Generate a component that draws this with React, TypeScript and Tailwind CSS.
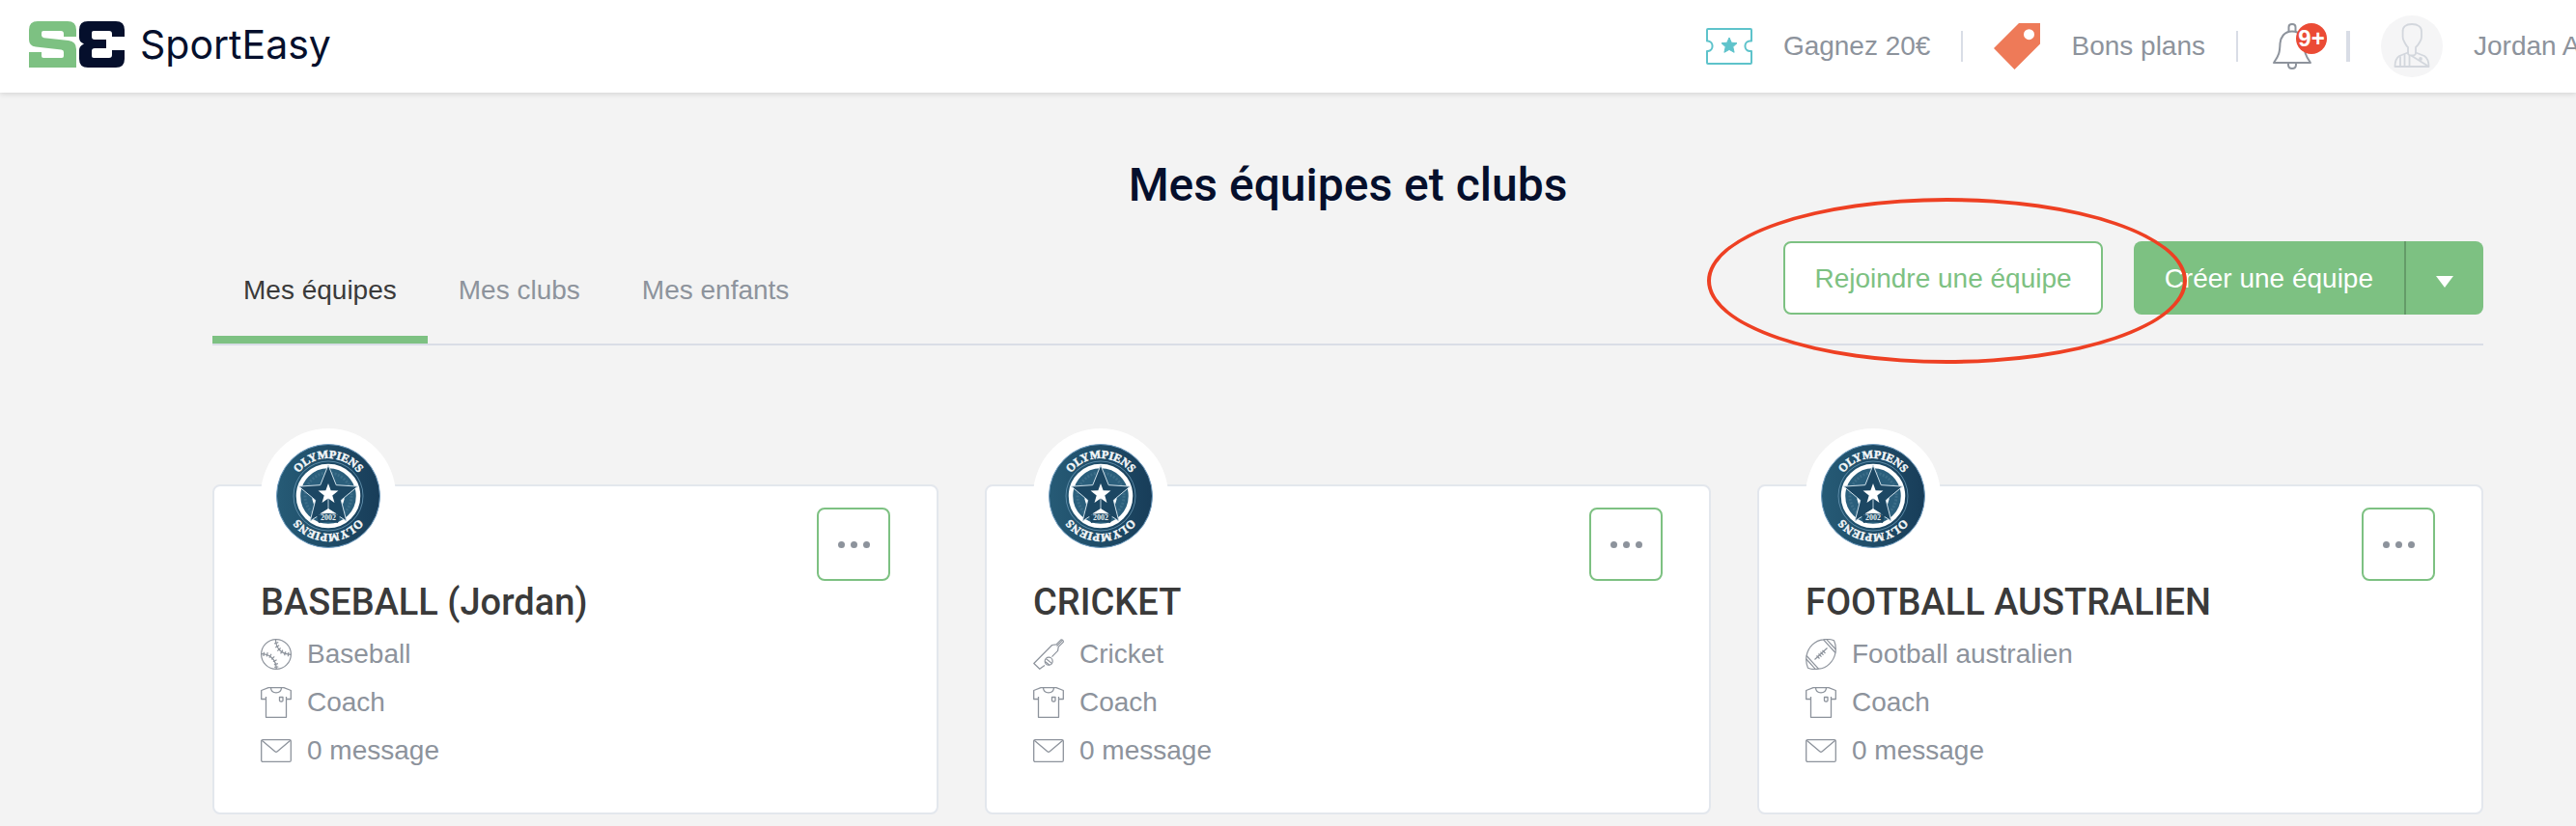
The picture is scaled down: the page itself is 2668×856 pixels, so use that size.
import { useId, useState, type ReactNode } from "react";

type Sport = "baseball" | "cricket" | "football";

type Team = {
  name: string;
  sport: string;
  icon: Sport;
  role: string;
  messages: string;
};

const teams: Team[] = [
  { name: "BASEBALL (Jordan)", sport: "Baseball", icon: "baseball", role: "Coach", messages: "0 message" },
  { name: "CRICKET", sport: "Cricket", icon: "cricket", role: "Coach", messages: "0 message" },
  { name: "FOOTBALL AUSTRALIEN", sport: "Football australien", icon: "football", role: "Coach", messages: "0 message" },
];

const tabs = ["Mes équipes", "Mes clubs", "Mes enfants"];

function LogoMark() {
  return (
    <svg viewBox="0 0 99 48" className="h-12 w-[99px]" aria-hidden="true">
      <path
        fill="#7dc182"
        d="M0 48V32H13V36Q13 38 15 38H34Q36 38 36 36V32Q36 30 33.500 29.600L7 26.500Q0 25.500 0 19V9Q0 0 9 0H40Q49 0 49 9V16H36V13Q36 10 33 10H15Q13 10 13 12V14.500Q13 16.800 15.500 17.200L41 20Q49 21 49 29V48Z"
      />
      <path
        fill="#050f2c"
        d="M61 0H90Q99 0 99 9V16H86V13Q86 10 83 10H67Q65 10 65 12V16Q65 19 68 19H80V28H68Q65 28 65 31V36Q65 38 67 38H83Q86 38 86 35V30H99V39Q99 48 90 48H61Q52 48 52 39V30Q52 25.500 57 23.500Q52 21.500 52 17V9Q52 0 61 0Z"
      />
    </svg>
  );
}

function TicketIcon() {
  return (
    <svg viewBox="0 0 48 38" className="h-[38px] w-12" fill="none" aria-hidden="true">
      <path
        stroke="#5ec3cb"
        strokeWidth="2"
        strokeLinejoin="round"
        d="M2 1H46Q47 1 47 2V13.500H45A5.300 5.300 0 0 0 45 24H47V36Q47 37 46 37H2Q1 37 1 36V24H2A5.300 5.300 0 0 0 2 13.500H1V2Q1 1 2 1Z"
      />
      <path
        fill="#5ec3cb"
        stroke="#5ec3cb"
        strokeLinejoin="round"
        d="M24 10L26.300 15.200L32 15.700L27.800 19.600L29.100 25.300L24 22.400L18.900 25.300L20.200 19.600L16 15.700L21.700 15.200Z"
      />
    </svg>
  );
}

function TagIcon() {
  return (
    <svg viewBox="0 0 48 48" className="size-12" aria-hidden="true">
      <path fill="#ee7a58" fillRule="evenodd" d="M26 0H48V21.500L21.500 48L0 26ZM36.500 6.200A5.500 5.500 0 1 0 36.500 17.200A5.500 5.500 0 1 0 36.500 6.200Z" />
    </svg>
  );
}

function BellIcon() {
  return (
    <svg viewBox="0 0 48 48" className="size-12" fill="none" stroke="#8d939c" strokeWidth="2" strokeLinejoin="round" aria-hidden="true">
      <path d="M20.500 9V4Q20.500 1 24 1Q27.500 1 27.500 4V9" />
      <path d="M24 8.500C15.500 8.500 12 15 11.500 21C11.200 30 10.500 33.500 5 41H43C37.500 33.500 36.800 30 36.500 21C36 15 32.500 8.500 24 8.500Z" />
      <path d="M20 41V43Q20 47 24 47Q28 47 28 43V41" />
    </svg>
  );
}

function AvatarIcon() {
  return (
    <svg viewBox="0 0 64 64" className="size-16 shrink-0" fill="none" aria-hidden="true">
      <circle cx="32" cy="32" r="32" fill="#f5f5f6" />
      <g stroke="#d3d7dd" strokeWidth="1.800" strokeLinejoin="round" strokeLinecap="round">
        <path d="M32 9C25.500 9 22.300 12 22.600 17V22Q22.600 25 24 27Q26.500 32 28 33V39Q28 41.500 32 41.500Q36 41.500 36 39V33Q38.500 31 40.500 27Q42 25 42 22V17C42.200 12 38.500 9 32 9Z" />
        <path d="M28 38.500L19 42Q14.500 45 14.500 53H49.500Q49.500 45 45 42L36 38.500" />
        <path d="M20 43V52M24.500 41V52M29.500 42V52" />
        <path d="M32 42L48 52" />
        <circle cx="41" cy="45" r="1" />
      </g>
    </svg>
  );
}

function SportIcon({ kind }: { kind: Sport }) {
  const common = {
    viewBox: "0 0 32 32",
    className: "size-8 shrink-0",
    fill: "none",
    stroke: "#8d939c",
    strokeWidth: 1.2,
    strokeLinejoin: "round" as const,
    "aria-hidden": true,
  };
  if (kind === "baseball") {
    return (
      <svg {...common}>
        <circle cx="16" cy="16" r="15.400" />
        <path d="M15.500 .6C15.500 9 20.500 16 31.400 16.300" />
        <path d="M.6 15.700C10 15.700 16 22 16.300 31.400" />
        <path d="M14 5L18.300 3.600M15.200 9L19.200 6.800M17.300 12.600L20.600 9.500M20.600 15.400L22.900 11.600M24.600 17.300L25.900 13.200M28.400 18.200L28.800 14" />
        <path d="M3.400 13.800L3 18M7.200 14.200L6.200 18.300M11 15.800L8.900 19.600M14.200 18.300L11.200 21.400M16.600 21.700L12.900 23.800M17.900 25.600L13.900 26.900M18.300 29L14.200 29.400" />
      </svg>
    );
  }
  if (kind === "cricket") {
    return (
      <svg {...common}>
        <path d="M12 27.500L6.800 31.300L.8 25.500L19.600 6.500L24 5.800L29 .8Q31.500 1 31.300 3.400L26.200 8.400L25.600 12.300L19.500 18.600" />
        <path d="M24.500 7.500L29.800 2.200" />
        <circle cx="16.200" cy="23.200" r="4" />
        <path d="M13.200 20.500L19.600 25.600M12.400 23.500L17 27.200" />
      </svg>
    );
  }
  return (
    <svg {...common}>
      <path d="M18.500 .8Q25 -.2 29.500 1.800Q32 7 31 14.500C29 24 22 30.500 13.500 31.200Q7 32.200 2.500 30.200Q0 25 1 17.500C3 8 10 1.500 18.500 .8Z" />
      <path d="M18.500 .8L31 14.500M22 .8L31.400 11M1 17.500L13.500 31.200M.8 21L10 31.200" />
      <path d="M9.500 21.500L22.500 9.500M11.500 17.500L14.500 20.500M13.500 15.500L16.500 18.700M15.500 13.700L18.500 16.900M17.500 11.800L20.500 15" />
    </svg>
  );
}

function JerseyIcon() {
  return (
    <svg viewBox="0 0 32 32" className="size-8 shrink-0" fill="none" stroke="#8d939c" strokeWidth="1.300" strokeLinejoin="round" aria-hidden="true">
      <path d="M5.500 10V31.300H26.500V10M5.500 12.500H.7V3.500L8 .7H24L31.300 3.500V12.500H26.500" />
      <path d="M10.500 .7Q10.800 5.800 16 5.800Q21.200 5.800 21.500 .7" />
      <path d="M19.500 10.500H23V14Q23 15 21.300 15Q19.500 15 19.500 14Z" />
    </svg>
  );
}

function EnvelopeIcon() {
  return (
    <svg viewBox="0 0 32 32" className="size-8 shrink-0" fill="none" stroke="#8d939c" strokeWidth="1.300" strokeLinejoin="round" aria-hidden="true">
      <rect x=".7" y="4.600" width="30.600" height="22.800" rx="1.500" />
      <path d="M1.200 5.200L14.800 16.800Q16 17.800 17.200 16.800L30.800 5.200" />
    </svg>
  );
}

function starPoints(cx: number, cy: number, outer: number, inner: number) {
  return Array.from({ length: 10 }, (_, i) => {
    const radius = i % 2 === 0 ? outer : inner;
    const angle = (Math.PI / 5) * i - Math.PI / 2;
    return `${(cx + radius * Math.cos(angle)).toFixed(2)},${(cy + radius * Math.sin(angle)).toFixed(2)}`;
  }).join(" ");
}

function Crest() {
  const id = useId();
  const arc = `${id}-arc`;
  const fill = `${id}-fill`;
  return (
    <svg viewBox="0 0 108 108" className="size-[108px]" role="img" aria-label="Olympiens">
      <defs>
        <path id={arc} d="M15 54A39 39 0 0 1 93 54" />
        <linearGradient id={fill}>
          <stop offset="0" stopColor="#265b76" />
          <stop offset="1" stopColor="#183d59" />
        </linearGradient>
      </defs>
      <circle cx="54" cy="54" r="53.500" fill={`url(#${fill})`} stroke="#6f9cc0" strokeWidth="1" />
      <circle cx="54" cy="54" r="36" fill="none" stroke="#5c8ba8" strokeWidth="1" />
      <circle cx="54" cy="54" r="31" fill="#2b5f7c" stroke="#ffffff" strokeWidth="4.500" />
      <circle cx="54" cy="54" r="24" fill="none" stroke="#3c6d88" strokeWidth="3" strokeDasharray="2 1.500" />
      <polygon points="37,56 44,60 40,66" fill="#ffffff" />
      <polygon points="71,56 64,60 68,66" fill="#ffffff" />
      <polygon points="54,66 61,73 47,73" fill="#ffffff" />
      <polygon points={starPoints(54, 54, 32, 14)} fill="#1c4763" stroke="#cfe0ea" strokeWidth="1" />
      <path d="M54 54V72" stroke="#b9d0dd" strokeWidth="1" />
      <path d="M46 72L54 67L62 72Z" fill="#ffffff" />
      <polygon points={starPoints(54, 52, 11, 4.5)} fill="#ffffff" />
      <path d="M42 74Q54 70 66 74L64 82Q54 79 44 82Z" fill="#1c4763" />
      <text x="54" y="79" textAnchor="middle" fill="#e5eef3" className="font-['Liberation_Serif',serif] text-[8px] font-bold">
        2002
      </text>
      <g
        fill="#f2f6f8"
        stroke="#f2f6f8"
        strokeWidth=".5"
        textAnchor="middle"
        className="font-['Liberation_Serif',serif] text-[12px] font-bold"
      >
        <text>
          <textPath href={`#${arc}`} startOffset="50%">OLYMPIENS</textPath>
        </text>
        <text transform="rotate(180 54 54)">
          <textPath href={`#${arc}`} startOffset="50%">OLYMPIENS</textPath>
        </text>
      </g>
    </svg>
  );
}

function Detail({ icon, children }: { icon: ReactNode; children: ReactNode }) {
  return (
    <li className="flex items-center gap-4 text-[28px] leading-8 text-[#8d939c]">
      {icon}
      <span>{children}</span>
    </li>
  );
}

function TeamCard({ team }: { team: Team }) {
  return (
    <article className="rounded-lg border-2 border-[#e3e7ed] bg-white px-12 pt-[22px] pb-12">
      <div className="flex items-start justify-between">
        <div className="-mt-[82px] flex size-[140px] items-center justify-center rounded-full bg-white">
          <Crest />
        </div>
        <button
          type="button"
          aria-label={`Options de ${team.name}`}
          className="flex size-[76px] items-center justify-center gap-[6px] rounded-lg border-2 border-[#7dc182] bg-white"
        >
          <span className="size-[7px] rounded-full bg-[#8d939c]" />
          <span className="size-[7px] rounded-full bg-[#8d939c]" />
          <span className="size-[7px] rounded-full bg-[#8d939c]" />
        </button>
      </div>
      <h2 className="font-[Roboto,sans-serif] text-[38px] leading-[44px] font-medium text-[#3a3a3a]">{team.name}</h2>
      <ul className="mt-4 flex flex-col gap-[18px]">
        <Detail icon={<SportIcon kind={team.icon} />}>{team.sport}</Detail>
        <Detail icon={<JerseyIcon />}>{team.role}</Detail>
        <Detail icon={<EnvelopeIcon />}>{team.messages}</Detail>
      </ul>
    </article>
  );
}

export default function App() {
  const [active, setActive] = useState(tabs[0]);

  return (
    <div className="min-h-screen overflow-hidden bg-[#f3f3f3] font-['Liberation_Sans',Arial,sans-serif]">
      <header className="flex h-24 items-center justify-between bg-white pl-[30px] text-[28px] text-[#8d939c] shadow-[0_1px_6px_rgba(0,0,0,0.15)]">
        <a href="#accueil" className="flex items-center gap-4 pb-1">
          <LogoMark />
          <span className="font-[Inter,sans-serif] text-[41px] leading-[48px] text-[#050f2c]">SportEasy</span>
        </a>
        <nav className="flex items-center gap-8 whitespace-nowrap">
          <a href="#parrainage" className="flex items-center gap-8">
            <TicketIcon />
            Gagnez 20€
          </a>
          <span className="h-8 w-[2px] bg-[#d9dde6]" />
          <a href="#bons-plans" className="flex items-center gap-8">
            <TagIcon />
            Bons plans
          </a>
          <span className="h-8 w-[2px] bg-[#d9dde6]" />
          <button type="button" aria-label="Notifications" className="relative">
            <BellIcon />
            <span className="absolute top-0 left-7 flex size-8 items-center justify-center rounded-full bg-[#eb4b35] text-[24px] leading-8 font-bold text-white">
              9+
            </span>
          </button>
          <span className="h-8 w-1 bg-[#d9dde6]" />
          <a href="#profil" className="flex items-center gap-8">
            <AvatarIcon />
            <span className="w-[106px] overflow-hidden">Jordan A</span>
          </a>
        </nav>
      </header>

      <main className="pt-16 pr-24 pb-3 pl-[220px]">
        <h1 className="text-center font-[Roboto,sans-serif] text-[48px] leading-[64px] font-medium text-[#050f2c]">
          Mes équipes et clubs
        </h1>

        <div className="flex items-end justify-between border-b-2 border-[#d9dde6] pt-[26px] text-[28px]">
          <div role="tablist" className="flex">
            {tabs.map((tab) => (
              <button
                key={tab}
                type="button"
                role="tab"
                aria-selected={tab === active}
                onClick={() => setActive(tab)}
                className={`h-[104px] border-b-8 px-8 pt-[2px] ${
                  tab === active ? "border-[#7dc182] text-[#3a3a3a]" : "border-transparent text-[#8d939c]"
                }`}
              >
                {tab}
              </button>
            ))}
          </div>
          <div className="relative mb-[30px] flex gap-8">
            <button type="button" className="h-[76px] rounded-lg border-2 border-[#7dc182] bg-white px-[30px] pt-[2px] text-[#7dc182]">
              Rejoindre une équipe
            </button>
            <div className="flex overflow-hidden rounded-lg bg-[#7dc182] text-white">
              <button type="button" className="h-[76px] px-8 pt-[2px]">
                Créer une équipe
              </button>
              <button
                type="button"
                aria-label="Autres options de création"
                className="flex h-[76px] w-[82px] items-center justify-center border-l-2 border-[#649b68]"
              >
                <svg viewBox="0 0 20 12" className="mt-2 h-3 w-5" aria-hidden="true">
                  <path fill="#ffffff" d="M1 0H19L10 12Z" />
                </svg>
              </button>
            </div>
            <span className="pointer-events-none absolute -top-[45px] -left-[79px] h-[172px] w-[497px] rounded-[50%] border-4 border-[#ee4023]" />
          </div>
        </div>

        <section className="mt-36 grid grid-cols-3 gap-12">
          {teams.map((team) => (
            <TeamCard key={team.name} team={team} />
          ))}
        </section>
      </main>
    </div>
  );
}
